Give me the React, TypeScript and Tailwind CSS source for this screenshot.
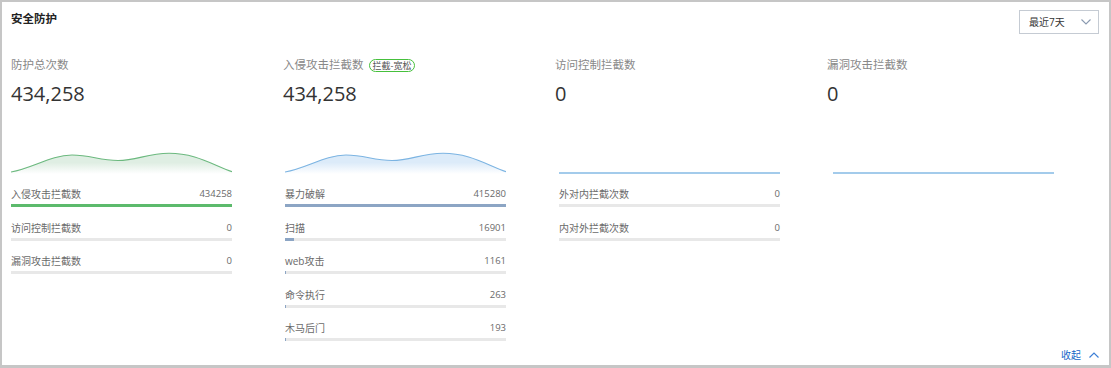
type Row = { label: string; value: number }

type Col = {
  label: string
  badge?: string
  total: string
  chart: 'green' | 'blue' | 'flat'
  bar: string
  rows: Row[]
}

const COLS: Col[] = [
  {
    label: '防护总次数',
    total: '434,258',
    chart: 'green',
    bar: 'bg-[#5cba6c]',
    rows: [
      { label: '入侵攻击拦截数', value: 434258 },
      { label: '访问控制拦截数', value: 0 },
      { label: '漏洞攻击拦截数', value: 0 },
    ],
  },
  {
    label: '入侵攻击拦截数',
    badge: '拦截-宽松',
    total: '434,258',
    chart: 'blue',
    bar: 'bg-[#8ca5c4]',
    rows: [
      { label: '暴力破解', value: 415280 },
      { label: '扫描', value: 16901 },
      { label: 'web攻击', value: 1161 },
      { label: '命令执行', value: 263 },
      { label: '木马后门', value: 193 },
    ],
  },
  {
    label: '访问控制拦截数',
    total: '0',
    chart: 'flat',
    bar: 'bg-[#8ca5c4]',
    rows: [
      { label: '外对内拦截次数', value: 0 },
      { label: '内对外拦截次数', value: 0 },
    ],
  },
  { label: '漏洞攻击拦截数', total: '0', chart: 'flat', bar: 'bg-[#8ca5c4]', rows: [] },
]

const WAVE =
  'M0,37 C22,33 40,20 61,20 C80,20 88,25.5 107,25.5 C126,25.5 136,18.3 158,18.3 C184,18.3 200,29 221,36.7'

function Spark({ kind, id }: { kind: Col['chart']; id: string }) {
  if (kind === 'flat') {
    return (
      <svg width="221" height="40" viewBox="0 0 221 40" className="block">
        <line x1="0" y1="38" x2="221" y2="38" stroke="#a3cbeb" strokeWidth="2" />
      </svg>
    )
  }
  const green = kind === 'green'
  const line = green ? '#6cb97f' : '#7cb4e2'
  const fill = green ? '#dfeee3' : '#dcebf9'
  return (
    <svg width="221" height="40" viewBox="0 0 221 40" className="block">
      <defs>
        <linearGradient id={id} x1="0" y1="0" x2="0" y2="1">
          <stop offset="0.45" stopColor={fill} />
          <stop offset="1" stopColor="#ffffff" />
        </linearGradient>
      </defs>
      <path d={`${WAVE} L221,39 L0,39 Z`} fill={`url(#${id})`} />
      <path d={WAVE} fill="none" stroke={line} strokeWidth="1.1" />
    </svg>
  )
}

function StatList({ rows, bar }: { rows: Row[]; bar: string }) {
  const max = Math.max(...rows.map((r) => r.value), 1)
  return (
    <div className="mt-[12px] flex w-[221px] flex-col gap-[13.5px]">
      {rows.map((r) => (
        <div key={r.label}>
          <div className="flex h-[14px] items-center justify-between text-[#6a6a6a]">
            <span className="text-[10px] leading-[14px]">{r.label}</span>
            <span className="text-[9.5px] leading-[14px]">{r.value}</span>
          </div>
          <div className="mt-[3px] h-[3px] bg-[#e8e8e8]">
            {r.value > 0 ? (
              <div className={`h-full ${bar}`} style={{ width: `max(1px, ${(r.value / max) * 100}%)` }} />
            ) : null}
          </div>
        </div>
      ))}
    </div>
  )
}

export default function App() {
  return (
    <div className="flex h-[368px] w-[1111px] flex-col border-2 border-b-[3px] border-[#c6c6c6] bg-white font-['Open_Sans','Noto_Sans_CJK_SC',sans-serif] text-[#333]">
      <header className="flex items-start justify-between pt-[8px] pr-[10px] pl-[9px]">
        <h1 className="mt-px text-[11.5px] leading-4 font-bold text-[#222]">安全防护</h1>
        <button className="flex h-6 w-20 items-center justify-between border border-[#c5cbd3] bg-white pr-[7px] pl-[9px] text-[10px] text-[#333]">
          <span>最近7天</span>
          <svg width="10" height="6" viewBox="0 0 10 6">
            <polyline points="0.5,0.5 5,5 9.5,0.5" fill="none" stroke="#8a9ab0" strokeWidth="1.1" />
          </svg>
        </button>
      </header>

      <div className="mt-[23px] grid grid-cols-[repeat(4,272px)] pl-[9px]">
        {COLS.map((c) => (
          <div key={c.label}>
            <div className="flex items-center gap-[5px] text-[11.5px] leading-4 text-[#888]">
              <span>{c.label}</span>
              {c.badge ? (
                <span className="rounded-full border border-[#46c03c] px-[3px] text-[9px] leading-[11px] text-[#555]">
                  {c.badge}
                </span>
              ) : null}
            </div>
            <div className="mt-[7px] text-[20px] leading-7 text-[#333]">{c.total}</div>
          </div>
        ))}
      </div>

      <div className="mt-[27px] grid grid-cols-[repeat(4,274px)] pl-[9px]">
        {COLS.map((c, i) => (
          <div key={c.label}>
            <Spark kind={c.chart} id={`g${i}`} />
            <StatList rows={c.rows} bar={c.bar} />
          </div>
        ))}
      </div>

      <footer className="mt-auto flex items-center justify-end gap-[8px] pr-[10px] pb-[3px]">
        <a href="#" className="text-[10px] leading-[14px] text-[#1466c8]">
          收起
        </a>
        <svg width="10" height="6" viewBox="0 0 10 6">
          <polyline points="0.5,5.5 5,1 9.5,5.5" fill="none" stroke="#3d7fd6" strokeWidth="1.2" />
        </svg>
      </footer>
    </div>
  )
}
